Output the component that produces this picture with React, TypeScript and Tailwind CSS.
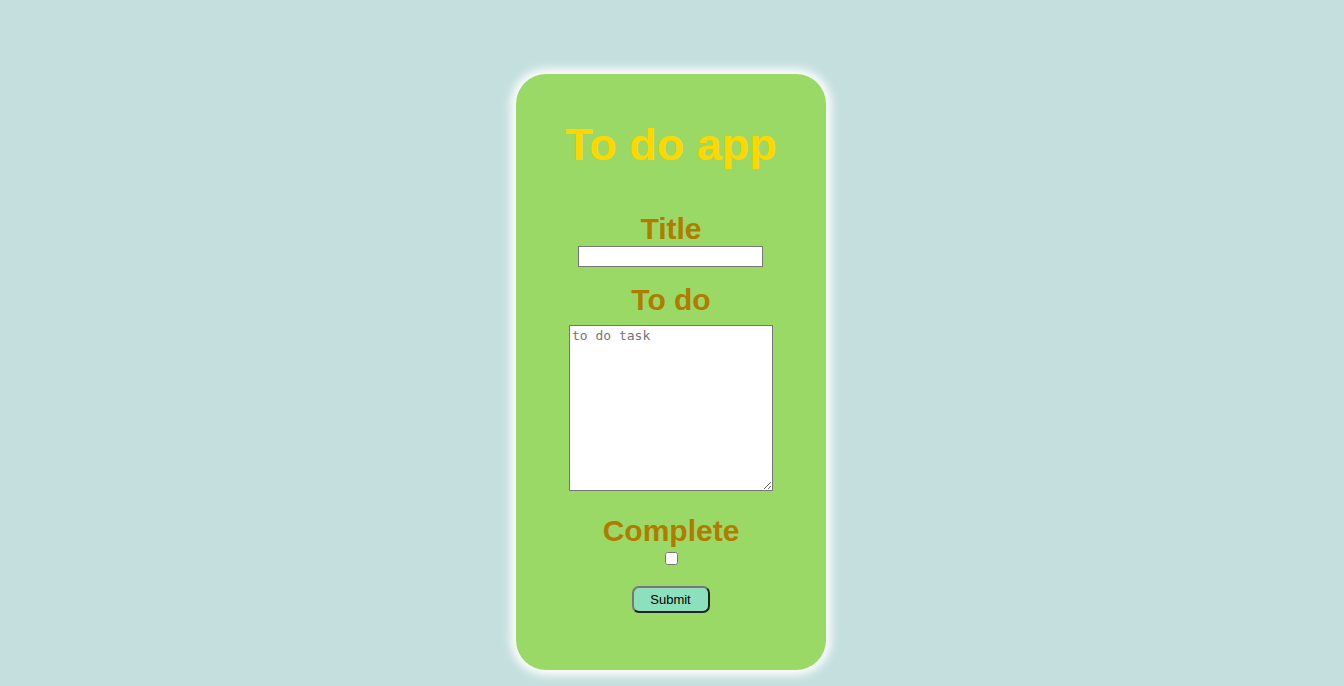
import React, { useState } from 'react';

export default function App() {
  const [title, setTitle] = useState('');
  const [task, setTask] = useState('');
  const [done, setDone] = useState(false);

  return (
    <div className="min-h-[686px] w-full bg-[#c5dfdf] pt-[74px] pr-[2px] font-['Liberation_Sans',Arial,sans-serif]">
      <div className="mx-auto flex h-[596px] w-[310px] flex-col items-center rounded-[30px] bg-[#9bd966] shadow-[0_0_10px_5px_#ffffff]">
        <h1 className="mt-[48px] text-[45px] font-bold leading-none text-[#ffd700]">To do app</h1>

        <form
          className="flex flex-col items-center"
          onSubmit={(e) => e.preventDefault()}
        >
          <label className="mt-[47px] text-[30px] font-bold leading-none text-[#b17b00]">Title</label>
          <input
            type="text"
            value={title}
            onChange={(e) => setTitle(e.target.value)}
            className="mt-[2px] mr-[1px] h-[21px] w-[185px] border border-[#767676] bg-white px-[2px] text-[13px] outline-none"
          />

          <label className="mt-[18px] text-[30px] font-bold leading-none text-[#b17b00]">To do</label>
          <textarea
            placeholder="to do task"
            value={task}
            onChange={(e) => setTask(e.target.value)}
            className="mt-[10px] h-[166px] w-[204px] border border-[#767676] bg-white p-[2px] font-['DejaVu_Sans_Mono',monospace] text-[13px] leading-[16px] outline-none placeholder:text-[#757575]"
          />

          <label className="mt-[25px] text-[30px] font-bold leading-none text-[#b17b00]">Complete</label>
          <input
            type="checkbox"
            checked={done}
            onChange={(e) => setDone(e.target.checked)}
            className="mt-[6px] h-[13px] w-[13px]"
          />

          <button
            type="submit"
            className="mt-[21px] mr-[1px] h-[27px] w-[78px] rounded-[7px] border-2 border-t-[#777777] border-l-[#777777] border-b-[#222222] border-r-[#222222] bg-[#8ce0be] text-[13px] text-black"
          >
            Submit
          </button>
        </form>
      </div>
    </div>
  );
}
